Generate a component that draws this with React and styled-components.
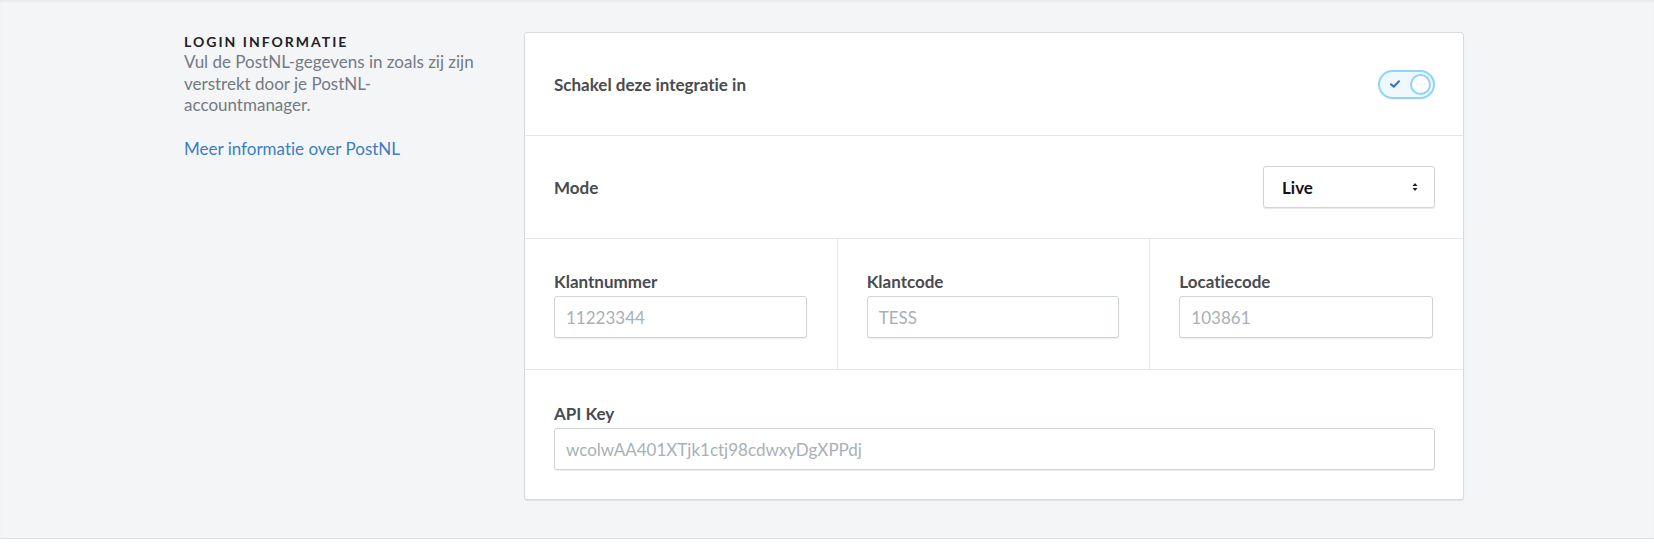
import React from "react";
import styled, { createGlobalStyle } from "styled-components";

const GlobalStyle = createGlobalStyle`
  html, body { margin: 0; padding: 0; background: #ffffff; }
  body {
    font-family: Lato, "Open Sans", "Liberation Sans", sans-serif;
    font-variant-ligatures: no-common-ligatures;
    font-feature-settings: "liga" 0, "clig" 0;
  }
  * { box-sizing: border-box; }
`;

const Section = styled.section`
  background: #f4f5f7;
  border-bottom: 1px solid #dcdfe2;
  box-shadow: inset 0 2px 3px -1px rgba(0, 0, 0, 0.07);
  padding: 32px 190px 38px 184px;
  display: grid;
  grid-template-columns: 340px 940px;
`;

const Aside = styled.div`
  padding-right: 36px;
`;

const Title = styled.h3`
  margin: 0;
  font-size: 14px;
  line-height: 19px;
  font-weight: 700;
  letter-spacing: 2px;
  color: #1f2124;
  text-transform: uppercase;
`;

const Description = styled.p`
  margin: 0;
  font-size: 17px;
  line-height: 21.5px;
  color: #737a82;
`;

const InfoLink = styled.a`
  display: inline-block;
  margin-top: 22px;
  font-size: 17px;
  line-height: 21.5px;
  color: #3b7dc4;
  text-decoration: none;
`;

const Card = styled.div`
  background: #ffffff;
  border: 1px solid #d7dbde;
  border-radius: 3px;
  box-shadow: 0 1px 1px rgba(0, 0, 0, 0.08);
`;

const Row = styled.div`
  display: flex;
  align-items: center;
  justify-content: space-between;
  min-height: 103px;
  padding: 0 28px 0 29px;
  border-bottom: 1px solid #e3e6e9;
`;

const RowLabel = styled.span`
  font-size: 17px;
  font-weight: 700;
  color: #484b4f;
`;

const Track = styled.div`
  width: 57px;
  height: 29px;
  border: 2px solid #8fd5f6;
  border-radius: 15px;
  background: #eef8fd;
  display: flex;
  align-items: center;
  justify-content: space-between;
  padding: 0 2px 0 10px;
`;

const Knob = styled.div`
  width: 21px;
  height: 21px;
  border-radius: 50%;
  border: 2px solid #8fd5f6;
  background: #ffffff;
  display: flex;
  align-items: center;
  justify-content: center;
`;

const Select = styled.div`
  width: 172px;
  height: 42px;
  border: 1px solid #cfd4d7;
  border-radius: 3px;
  box-shadow: 0 1px 1px rgba(0, 0, 0, 0.1);
  display: flex;
  align-items: center;
  justify-content: space-between;
  padding: 0 16px 0 18px;
  font-size: 17px;
  font-weight: 700;
  color: #111315;
`;

const FieldGrid = styled.div`
  display: grid;
  grid-template-columns: ${(p) => `repeat(${p.$cols}, 1fr)`};
  border-bottom: ${(p) => (p.$last ? "none" : "1px solid #e3e6e9")};
`;

const Field = styled.div`
  padding: ${(p) => (p.$wide ? "33px 28px 29px 29px" : "32px 30px 31px 29px")};
  border-right: ${(p) => (p.$divider ? "1px solid #e3e6e9" : "none")};
  display: flex;
  flex-direction: column;
`;

const Label = styled.label`
  font-size: 17px;
  line-height: 21px;
  font-weight: 700;
  color: #484b4f;
  margin-bottom: 4px;
`;

const Input = styled.input`
  height: 42px;
  width: 100%;
  border: 1px solid #cfd4d7;
  border-radius: 3px;
  box-shadow: 0 1px 1px rgba(0, 0, 0, 0.08);
  padding: 0 11px;
  font-family: Lato, "Open Sans", "Liberation Sans", sans-serif;
  font-variant-ligatures: no-common-ligatures;
  font-size: 17px;
  color: #333;
  outline: none;
  &::placeholder { color: #a9b0b5; }
`;

const Toggle = () => (
  <Track>
    <svg width="10" height="8" viewBox="0 0 10 8">
      <path d="M1 4.2 L3.8 6.8 L9 1.2" fill="none" stroke="#3a74c0" strokeWidth="2" strokeLinecap="round" strokeLinejoin="round" />
    </svg>
    <Knob>
      <svg width="10" height="2" viewBox="0 0 10 2">
        {[1, 3.7, 6.3, 9].map((x) => (
          <circle key={x} cx={x} cy="1" r="0.6" fill="#c9ced2" />
        ))}
      </svg>
    </Knob>
  </Track>
);

const Arrows = () => (
  <svg width="6" height="10" viewBox="0 0 6 10">
    <path d="M3 1 L5.5 4 L0.5 4 Z" fill="#222" />
    <path d="M3 9 L5.5 6 L0.5 6 Z" fill="#222" />
  </svg>
);

const fields = [
  { label: "Klantnummer", placeholder: "11223344" },
  { label: "Klantcode", placeholder: "TESS" },
  { label: "Locatiecode", placeholder: "103861" },
];

export default function App() {
  return (
    <>
      <GlobalStyle />
      <Section>
        <Aside>
          <Title>Login informatie</Title>
          <Description>
            Vul de PostNL-gegevens in zoals zij zijn verstrekt door je PostNL-accountmanager.
          </Description>
          <InfoLink href="#">Meer informatie over PostNL</InfoLink>
        </Aside>
        <Card>
          <Row>
            <RowLabel>Schakel deze integratie in</RowLabel>
            <Toggle />
          </Row>
          <Row>
            <RowLabel>Mode</RowLabel>
            <Select>
              <span>Live</span>
              <Arrows />
            </Select>
          </Row>
          <FieldGrid $cols={3}>
            {fields.map((f, i) => (
              <Field key={f.label} $divider={i < fields.length - 1}>
                <Label>{f.label}</Label>
                <Input placeholder={f.placeholder} />
              </Field>
            ))}
          </FieldGrid>
          <FieldGrid $cols={1} $last>
            <Field $wide>
              <Label>API Key</Label>
              <Input placeholder="wcolwAA401XTjk1ctj98cdwxyDgXPPdj" />
            </Field>
          </FieldGrid>
        </Card>
      </Section>
    </>
  );
}
